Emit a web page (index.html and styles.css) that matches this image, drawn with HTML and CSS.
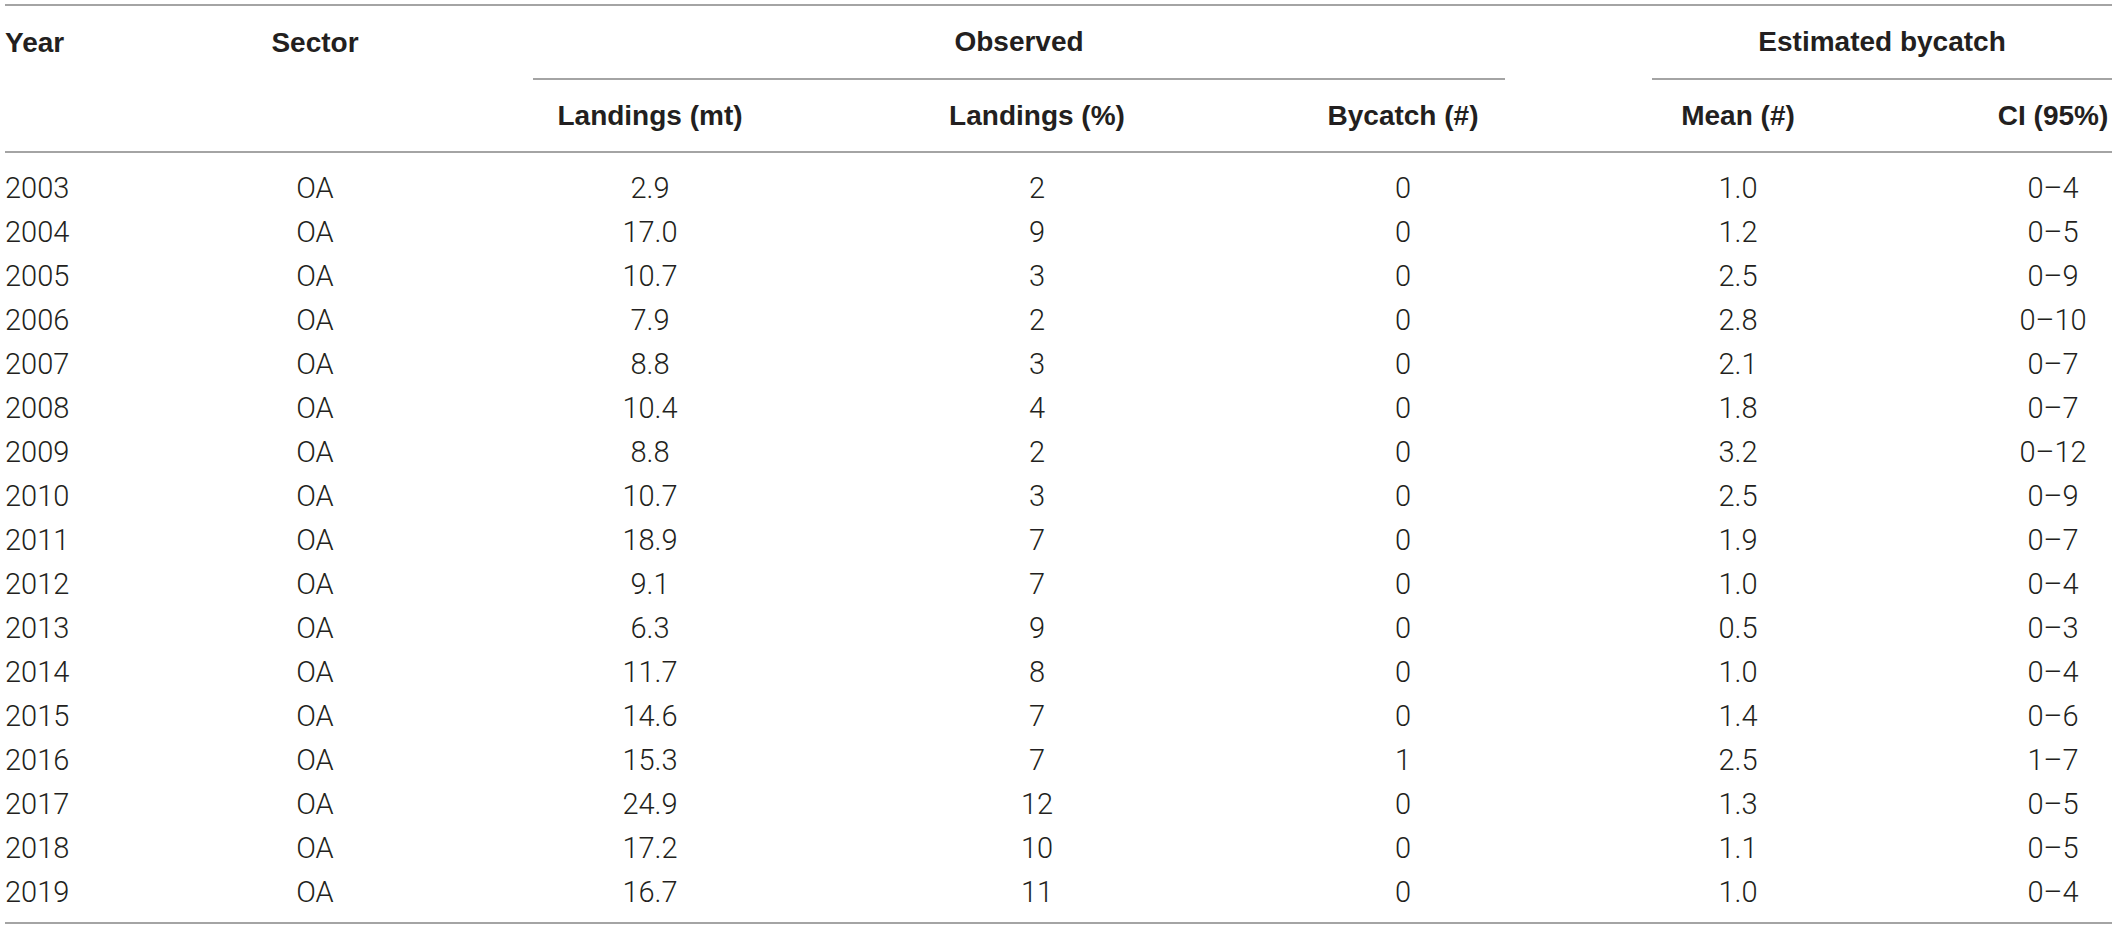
FILE: index.html
```html
<!DOCTYPE html>
<html lang="en">
<head>
<meta charset="utf-8">
<title>Bycatch table</title>
<link rel="stylesheet" href="styles.css">
</head>
<body>
<table class="data-table">
  <colgroup>
    <col class="col-year">
    <col class="col-sector">
    <col class="col-land-mt">
    <col class="col-land-pct">
    <col class="col-bycatch">
    <col class="col-mean">
    <col class="col-ci">
  </colgroup>
  <thead>
    <tr class="head-top">
      <th class="h-left">Year</th>
      <th>Sector</th>
      <th colspan="3"><div class="group group-observed">Observed</div></th>
      <th colspan="2"><div class="group group-estimated">Estimated bycatch</div></th>
    </tr>
    <tr class="head-sub">
      <th></th>
      <th></th>
      <th>Landings (mt)</th>
      <th>Landings (%)</th>
      <th>Bycatch (#)</th>
      <th>Mean (#)</th>
      <th>CI (95%)</th>
    </tr>
  </thead>
  <tbody>
    <tr><td class="d-left">2003</td><td>OA</td><td>2.9</td><td>2</td><td>0</td><td>1.0</td><td>0–4</td></tr>
    <tr><td class="d-left">2004</td><td>OA</td><td>17.0</td><td>9</td><td>0</td><td>1.2</td><td>0–5</td></tr>
    <tr><td class="d-left">2005</td><td>OA</td><td>10.7</td><td>3</td><td>0</td><td>2.5</td><td>0–9</td></tr>
    <tr><td class="d-left">2006</td><td>OA</td><td>7.9</td><td>2</td><td>0</td><td>2.8</td><td>0–10</td></tr>
    <tr><td class="d-left">2007</td><td>OA</td><td>8.8</td><td>3</td><td>0</td><td>2.1</td><td>0–7</td></tr>
    <tr><td class="d-left">2008</td><td>OA</td><td>10.4</td><td>4</td><td>0</td><td>1.8</td><td>0–7</td></tr>
    <tr><td class="d-left">2009</td><td>OA</td><td>8.8</td><td>2</td><td>0</td><td>3.2</td><td>0–12</td></tr>
    <tr><td class="d-left">2010</td><td>OA</td><td>10.7</td><td>3</td><td>0</td><td>2.5</td><td>0–9</td></tr>
    <tr><td class="d-left">2011</td><td>OA</td><td>18.9</td><td>7</td><td>0</td><td>1.9</td><td>0–7</td></tr>
    <tr><td class="d-left">2012</td><td>OA</td><td>9.1</td><td>7</td><td>0</td><td>1.0</td><td>0–4</td></tr>
    <tr><td class="d-left">2013</td><td>OA</td><td>6.3</td><td>9</td><td>0</td><td>0.5</td><td>0–3</td></tr>
    <tr><td class="d-left">2014</td><td>OA</td><td>11.7</td><td>8</td><td>0</td><td>1.0</td><td>0–4</td></tr>
    <tr><td class="d-left">2015</td><td>OA</td><td>14.6</td><td>7</td><td>0</td><td>1.4</td><td>0–6</td></tr>
    <tr><td class="d-left">2016</td><td>OA</td><td>15.3</td><td>7</td><td>1</td><td>2.5</td><td>1–7</td></tr>
    <tr><td class="d-left">2017</td><td>OA</td><td>24.9</td><td>12</td><td>0</td><td>1.3</td><td>0–5</td></tr>
    <tr><td class="d-left">2018</td><td>OA</td><td>17.2</td><td>10</td><td>0</td><td>1.1</td><td>0–5</td></tr>
    <tr><td class="d-left">2019</td><td>OA</td><td>16.7</td><td>11</td><td>0</td><td>1.0</td><td>0–4</td></tr>
  </tbody>
</table>
</body>
</html>
```

FILE: styles.css
```css
html, body {
  margin: 0;
  padding: 0;
  background: #ffffff;
}

.data-table {
  margin: 4px 0 0 5px;
  width: 2107px;
  table-layout: fixed;
  border-collapse: separate;
  border-spacing: 0;
  border-top: 2px solid #a4a4a4;
  border-bottom: 2px solid #a4a4a4;
  color: #231f20;
}

.col-year { width: 75px; }
.col-sector { width: 470px; }
.col-land-mt { width: 200px; }
.col-land-pct { width: 574px; }
.col-bycatch { width: 158px; }
.col-mean { width: 512px; }
.col-ci { width: 118px; }

.data-table th {
  padding: 0;
  font-family: "Liberation Sans", Arial, Helvetica, sans-serif;
  font-weight: 700;
  font-size: 28px;
  text-align: center;
  vertical-align: middle;
  white-space: nowrap;
}

.head-top th {
  line-height: 72px;
}

.head-sub th {
  line-height: 71px;
  border-bottom: 2px solid #a4a4a4;
}

.data-table .h-left {
  text-align: left;
}

.group {
  border-bottom: 2px solid #a4a4a4;
}

.group-observed {
  margin: 0 -23px 0 -17px;
}

.group-estimated {
  margin: 0 0 0 170px;
}

.data-table td {
  padding: 0;
  font-family: Roboto, "Liberation Sans", Arial, sans-serif;
  font-weight: 300;
  font-size: 29px;
  line-height: 44px;
  text-align: center;
  white-space: nowrap;
}

.data-table tbody tr:first-child td {
  padding-top: 13px;
}

.data-table tbody tr:last-child td {
  padding-bottom: 8px;
}

.data-table .d-left {
  text-align: left;
}
```
